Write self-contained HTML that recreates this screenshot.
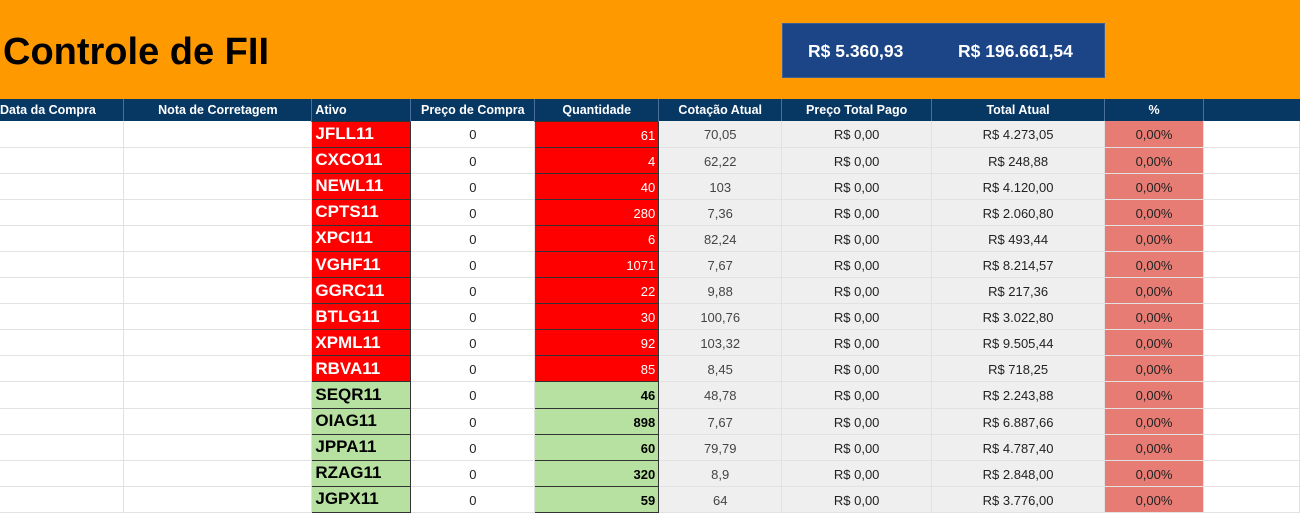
<!DOCTYPE html>
<html><head><meta charset="utf-8"><style>
*{margin:0;padding:0;box-sizing:border-box}
body{width:1300px;height:511px;overflow:hidden;background:#fff;font-family:"Liberation Sans",Arial,sans-serif;position:relative}
.top{position:absolute;left:0;top:0;width:1300px;height:99px;background:#ff9900}
.title{position:absolute;left:3px;top:31px;font-size:38px;font-weight:bold;color:#000}
.box{position:absolute;left:782px;top:23px;width:323px;height:55px;background:#1c4587;border:1px solid #3d5f96;color:#fff;font-weight:bold;font-size:17.5px}
.box span{position:absolute;top:17px}
table{position:absolute;left:0;top:99px;border-collapse:collapse;table-layout:fixed}
th{background:#073763;color:#fff;font-size:12.5px;font-weight:bold;height:22px;border-left:1px solid #4a6f98;text-align:center;padding:0}
td{height:26.1px;border-bottom:1px solid #e2e2e2;border-right:1px solid #e2e2e2;font-size:13px;color:#222;text-align:center;padding:2px 3px 0}
td.a{font-weight:bold;font-size:17px;text-align:left;border:1px solid #333;color:#fff;background:#f00;padding-top:0}
td.q{text-align:right;background:#f00;color:#fff;border:1px solid #333}
tr.g td.a{background:#b7e1a1;color:#000}
tr.g td.q{background:#b7e1a1;color:#000;font-weight:bold}
td.c{background:#efefef;color:#444}
td.t{background:#efefef}
td.p{background:#e67c73}
</style></head><body>
<div class="top"></div>
<div class="title">Controle de FII</div>
<div class="box"><span style="left:25px">R$ 5.360,93</span><span style="left:175px">R$ 196.661,54</span></div>
<table>
<colgroup><col style="width:124px"><col style="width:188px"><col style="width:99px"><col style="width:124px"><col style="width:124px"><col style="width:123px"><col style="width:150px"><col style="width:173px"><col style="width:99px"><col style="width:96px"></colgroup>
<tr><th style="text-align:left;border-left:none">Data da Compra</th><th>Nota de Corretagem</th><th style="text-align:left;padding-left:3px">Ativo</th><th>Preço de Compra</th><th>Quantidade</th><th>Cotação Atual</th><th>Preço Total Pago</th><th>Total Atual</th><th>%</th><th></th></tr>
<tr><td></td><td></td><td class="a">JFLL11</td><td>0</td><td class="q">61</td><td class="c">70,05</td><td class="t">R$ 0,00</td><td class="t">R$ 4.273,05</td><td class="p">0,00%</td><td></td></tr>
<tr><td></td><td></td><td class="a">CXCO11</td><td>0</td><td class="q">4</td><td class="c">62,22</td><td class="t">R$ 0,00</td><td class="t">R$ 248,88</td><td class="p">0,00%</td><td></td></tr>
<tr><td></td><td></td><td class="a">NEWL11</td><td>0</td><td class="q">40</td><td class="c">103</td><td class="t">R$ 0,00</td><td class="t">R$ 4.120,00</td><td class="p">0,00%</td><td></td></tr>
<tr><td></td><td></td><td class="a">CPTS11</td><td>0</td><td class="q">280</td><td class="c">7,36</td><td class="t">R$ 0,00</td><td class="t">R$ 2.060,80</td><td class="p">0,00%</td><td></td></tr>
<tr><td></td><td></td><td class="a">XPCI11</td><td>0</td><td class="q">6</td><td class="c">82,24</td><td class="t">R$ 0,00</td><td class="t">R$ 493,44</td><td class="p">0,00%</td><td></td></tr>
<tr><td></td><td></td><td class="a">VGHF11</td><td>0</td><td class="q">1071</td><td class="c">7,67</td><td class="t">R$ 0,00</td><td class="t">R$ 8.214,57</td><td class="p">0,00%</td><td></td></tr>
<tr><td></td><td></td><td class="a">GGRC11</td><td>0</td><td class="q">22</td><td class="c">9,88</td><td class="t">R$ 0,00</td><td class="t">R$ 217,36</td><td class="p">0,00%</td><td></td></tr>
<tr><td></td><td></td><td class="a">BTLG11</td><td>0</td><td class="q">30</td><td class="c">100,76</td><td class="t">R$ 0,00</td><td class="t">R$ 3.022,80</td><td class="p">0,00%</td><td></td></tr>
<tr><td></td><td></td><td class="a">XPML11</td><td>0</td><td class="q">92</td><td class="c">103,32</td><td class="t">R$ 0,00</td><td class="t">R$ 9.505,44</td><td class="p">0,00%</td><td></td></tr>
<tr><td></td><td></td><td class="a">RBVA11</td><td>0</td><td class="q">85</td><td class="c">8,45</td><td class="t">R$ 0,00</td><td class="t">R$ 718,25</td><td class="p">0,00%</td><td></td></tr>
<tr class="g"><td></td><td></td><td class="a">SEQR11</td><td>0</td><td class="q">46</td><td class="c">48,78</td><td class="t">R$ 0,00</td><td class="t">R$ 2.243,88</td><td class="p">0,00%</td><td></td></tr>
<tr class="g"><td></td><td></td><td class="a">OIAG11</td><td>0</td><td class="q">898</td><td class="c">7,67</td><td class="t">R$ 0,00</td><td class="t">R$ 6.887,66</td><td class="p">0,00%</td><td></td></tr>
<tr class="g"><td></td><td></td><td class="a">JPPA11</td><td>0</td><td class="q">60</td><td class="c">79,79</td><td class="t">R$ 0,00</td><td class="t">R$ 4.787,40</td><td class="p">0,00%</td><td></td></tr>
<tr class="g"><td></td><td></td><td class="a">RZAG11</td><td>0</td><td class="q">320</td><td class="c">8,9</td><td class="t">R$ 0,00</td><td class="t">R$ 2.848,00</td><td class="p">0,00%</td><td></td></tr>
<tr class="g"><td></td><td></td><td class="a">JGPX11</td><td>0</td><td class="q">59</td><td class="c">64</td><td class="t">R$ 0,00</td><td class="t">R$ 3.776,00</td><td class="p">0,00%</td><td></td></tr>
</table>
</body></html>
